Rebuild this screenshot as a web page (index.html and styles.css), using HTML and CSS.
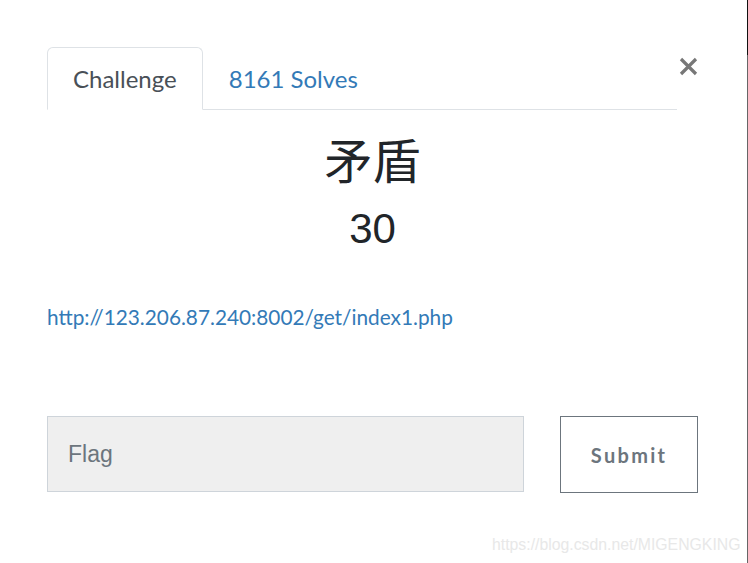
FILE: index.html
```html
<!DOCTYPE html>
<html lang="zh">
<head>
  <meta charset="UTF-8">
  <title>Challenge</title>
  <link rel="stylesheet" href="styles.css">
</head>
<body>

  <div class="modal">
    <div class="modal-head">
      <ul class="tabs">
        <li class="tab active">Challenge</li>
        <li class="tab">8161 Solves</li>
      </ul>
      <button class="close" aria-label="Close">
        <svg width="19" height="19" viewBox="0 0 19 19">
          <path d="M2 2 L17 17 M17 2 L2 17" stroke="#777" stroke-width="3.2" fill="none"/>
        </svg>
      </button>
    </div>

    <div class="challenge">
      <h2 class="name">矛盾</h2>
      <h3 class="value">30</h3>
      <p class="desc"><a href="#">http://123.206.87.240:8002/get/index1.php</a></p>
    </div>

    <form class="submit-row">
      <input type="text" class="flag-input" placeholder="Flag">
      <button type="button" class="submit-btn">Submit</button>
    </form>

    <div class="watermark">https://blog.csdn.net/MIGENGKING</div>
  </div>

  <div class="edge"></div>

</body>
</html>
```

FILE: styles.css
```css
html, body {
  margin: 0;
  padding: 0;
  background: #fff;
}

body {
  display: flex;
  width: 748px;
  height: 563px;
  overflow: hidden;
}

.modal {
  flex: 1;
  padding: 47px 0 0 47px;
  font-family: 'Lato', sans-serif;
  color: #212529;
}

.modal-head {
  display: flex;
  align-items: flex-start;
  width: 651px;
}

.tabs {
  list-style: none;
  margin: 0;
  padding: 0;
  display: flex;
  width: 631px;
  border-bottom: 1px solid #dee2e6;
}

.tab {
  padding: 17px 25px 16px;
  height: 28px;
  font-size: 24px;
  line-height: 28px;
  color: #337ab7;
  border: 1px solid transparent;
  border-top-left-radius: 6px;
  border-top-right-radius: 6px;
  margin-bottom: -1px;
}

.tab.active {
  color: #495057;
  background: #fff;
  border-color: #dee2e6 #dee2e6 #fff;
}

.close {
  margin: 10px 0 0 2px;
  padding: 0;
  border: none;
  background: none;
  width: 19px;
  height: 19px;
  line-height: 0;
}

.challenge {
  width: 651px;
  text-align: center;
}

.name {
  margin: 19px 0 0;
  font-family: 'Noto Sans CJK SC', sans-serif;
  font-weight: 400;
  font-size: 48px;
  line-height: 58px;
}

.value {
  margin: 15px 0 0;
  font-family: 'Liberation Sans', Arial, sans-serif;
  font-weight: 400;
  font-size: 42px;
  line-height: 54px;
}

.desc {
  margin: 47px 0 0;
  text-align: left;
  font-size: 20.8px;
  line-height: 28px;
}

.desc a {
  color: #337ab7;
  text-decoration: none;
}

.submit-row {
  display: flex;
  gap: 36px;
  width: 651px;
  margin-top: 85px;
}

.flag-input {
  box-sizing: border-box;
  width: 478px;
  height: 76px;
  padding: 0 20px;
  border: 1px solid #ced4da;
  background: #efefef;
  font-family: 'Liberation Sans', Arial, sans-serif;
  font-size: 23px;
  color: #495057;
  outline: none;
}

.flag-input::placeholder {
  color: #6c757d;
}

.submit-btn {
  box-sizing: border-box;
  width: 138px;
  height: 77px;
  border: 1px solid #6c757d;
  background: #fff;
  color: #6c757d;
  font-family: 'Lato', sans-serif;
  font-weight: bold;
  font-size: 20px;
  letter-spacing: 2.3px;
  border-radius: 0;
}

.watermark {
  margin: 43px 0 0 445px;
  font-family: 'Liberation Sans', Arial, sans-serif;
  font-size: 15.8px;
  color: #e8e8e8;
  white-space: nowrap;
}

.edge {
  width: 1px;
  flex: none;
  background: linear-gradient(to bottom, #111 0, #111 55px, #666 55px, #666 100%);
}
```
